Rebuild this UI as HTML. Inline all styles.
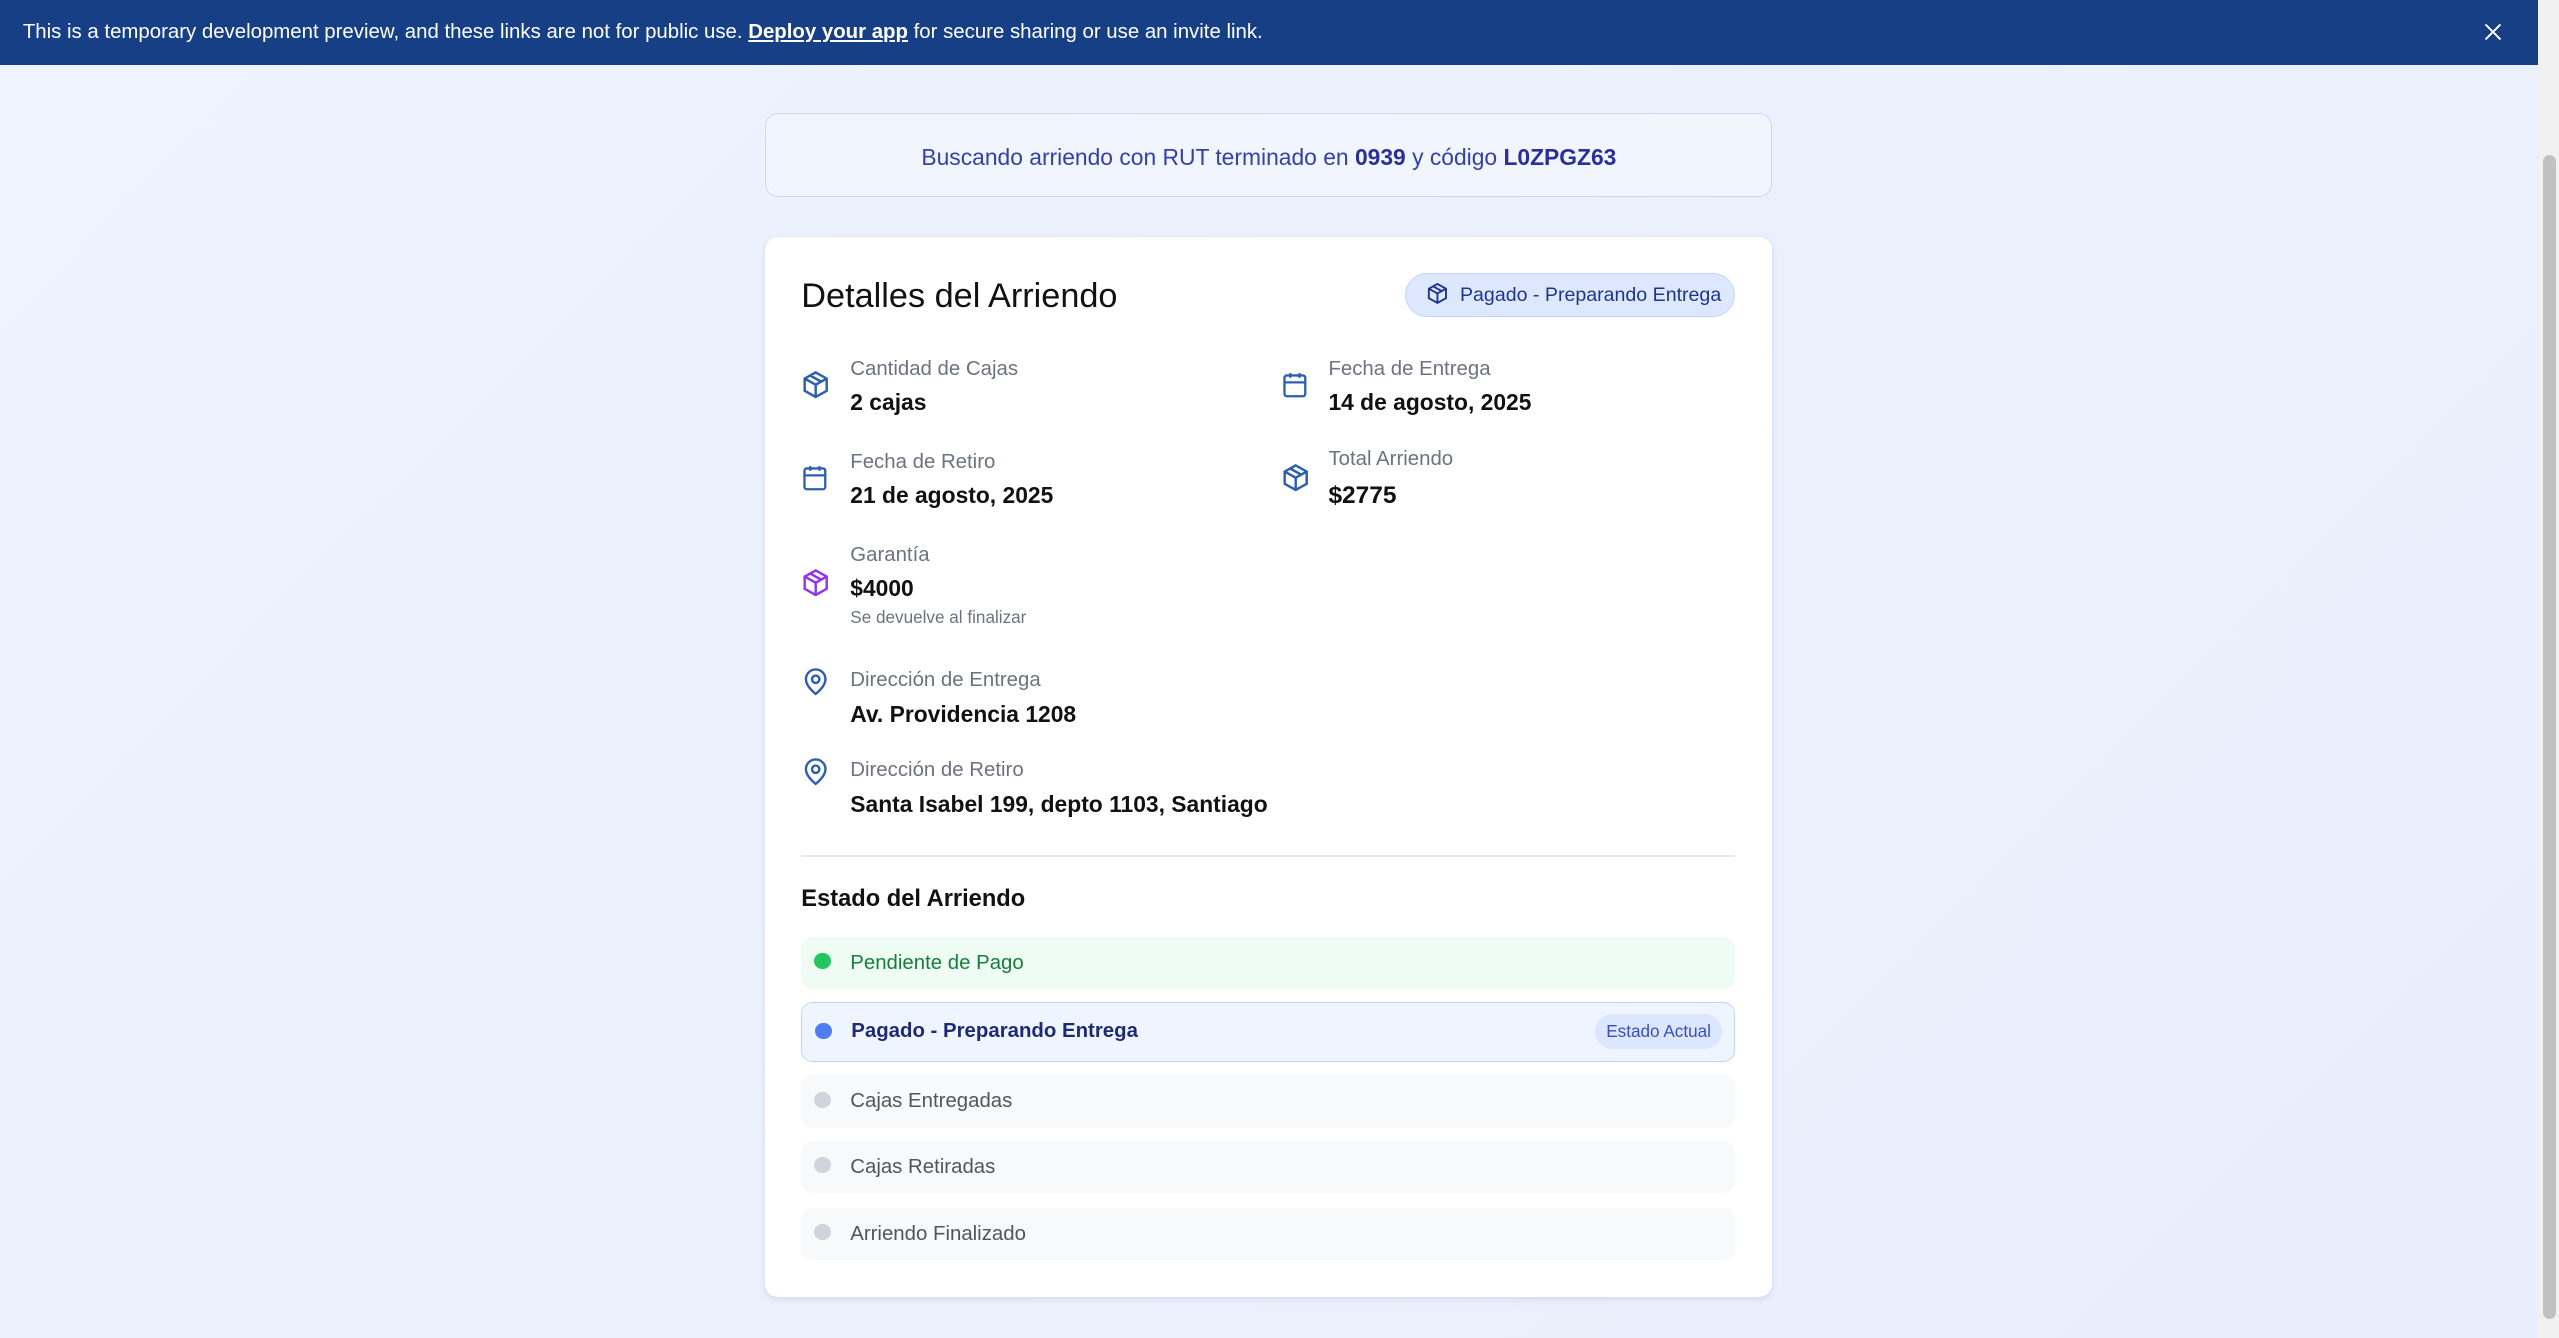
<!DOCTYPE html>
<html><head><meta charset="utf-8"><style>
html,body{margin:0;padding:0;width:2559px;height:1338px;overflow:hidden}
body{background:linear-gradient(135deg,#eef3fd,#e8eefc);font-family:"Liberation Sans",sans-serif}
#z{zoom:1.632;position:relative;width:1568px;height:820px}
.a{position:absolute}
.banner{left:0;top:0;width:1555px;height:40px;background:#173f86;color:#fff;font-size:12.5px;line-height:40px;padding-left:14px;box-sizing:border-box}
.banner u{font-weight:700}
.sb{left:1555px;top:0;width:13px;height:820px;background:#f1f1f1}
.thumb{left:1558px;top:95px;width:8px;height:713px;background:#c1c1c1;border-radius:4px}
.search{left:469px;top:69px;width:617px;height:52px;box-sizing:border-box;border:1px solid #cbd7f3;background:#f1f5fe;border-radius:8px;text-align:center;line-height:53px;font-size:14px;color:#3341a8}
.search b{color:#2a2f9a}
.card{left:469px;top:145px;width:617px;height:650px;background:#fff;border-radius:8px;box-shadow:0 1px 4px rgba(30,50,120,.12)}
.title{left:22px;top:23px;font-size:21px;color:#111;line-height:28px}
.badge{left:392px;top:22px;width:202px;height:27px;box-sizing:border-box;background:#dde8fe;border:1px solid #c2d4fb;border-radius:14px;font-size:12px;color:#1e3590;line-height:26px;padding-left:33px;white-space:nowrap}
.badge svg{position:absolute;left:12px;top:5px}
.lb{font-size:12.5px;color:#6b7280;line-height:16px}
.vl{font-size:14px;color:#111;font-weight:700;line-height:18px}
.sm{font-size:10.5px;color:#6b7280}
.hr{left:22px;top:379px;width:572px;height:1px;background:#e5e7eb}
.h2{left:22px;top:398px;font-size:14.5px;font-weight:700;color:#111}
.st{left:22px;width:572px;box-sizing:border-box;border-radius:7px;font-size:12.5px;padding-left:30px;white-space:nowrap}
.dot{position:absolute;left:8px;width:10px;height:10px;border-radius:50%}
</style></head><body><div id="z">
<div class="a banner">This is a temporary development preview, and these links are not for public use. <u>Deploy your app</u> for secure sharing or use an invite link.</div>
<svg class="a" style="left:1522px;top:14px" width="11" height="11" viewBox="0 0 12 12" stroke="#fff" stroke-width="1.3"><path d="M1 1l10 10M11 1L1 11"/></svg>
<div class="a sb"></div><div class="a thumb"></div>
<div class="a search">Buscando arriendo con RUT terminado en <b>0939</b> y código <b>L0ZPGZ63</b></div>
<div class="a card">
<div class="a title">Detalles del Arriendo</div>
<div class="a badge"><svg width="14" height="14" viewBox="0 0 24 24" fill="none" stroke="#1e3590" stroke-width="2"><path d="M12 2l9 5v10l-9 5-9-5V7z M3 7l9 5 9-5 M12 12v10 M7.5 4.5l9 5"/></svg>Pagado - Preparando Entrega</div>

<svg class="a" style="left:22px;top:82px" width="18" height="18" viewBox="0 0 24 24" fill="none" stroke="#2e5fae" stroke-width="2"><path d="M12 2l9 5v10l-9 5-9-5V7z M3 7l9 5 9-5 M12 12v10 M7.5 4.5l9 5"/></svg>
<div class="a" style="left:52px;top:73px"><div class="lb">Cantidad de Cajas</div><div class="vl" style="margin-top:4px">2 cajas</div></div>
<svg class="a" style="left:316px;top:82px" width="17" height="18" viewBox="0 0 24 24" fill="none" stroke="#2e5fae" stroke-width="2"><rect x="3" y="4" width="18" height="18" rx="2"/><path d="M16 2v4M8 2v4M3 10h18"/></svg>
<div class="a" style="left:345px;top:73px"><div class="lb">Fecha de Entrega</div><div class="vl" style="margin-top:4px">14 de agosto, 2025</div></div>

<svg class="a" style="left:22px;top:139px" width="17" height="18" viewBox="0 0 24 24" fill="none" stroke="#2e5fae" stroke-width="2"><rect x="3" y="4" width="18" height="18" rx="2"/><path d="M16 2v4M8 2v4M3 10h18"/></svg>
<div class="a" style="left:52px;top:130px"><div class="lb">Fecha de Retiro</div><div class="vl" style="margin-top:4px">21 de agosto, 2025</div></div>
<svg class="a" style="left:316px;top:139px" width="18" height="18" viewBox="0 0 24 24" fill="none" stroke="#2e5fae" stroke-width="2"><path d="M12 2l9 5v10l-9 5-9-5V7z M3 7l9 5 9-5 M12 12v10 M7.5 4.5l9 5"/></svg>
<div class="a" style="left:345px;top:128px"><div class="lb">Total Arriendo</div><div class="vl" style="margin-top:6px;font-size:15px">$2775</div></div>

<svg class="a" style="left:22px;top:203px" width="18" height="18" viewBox="0 0 24 24" fill="none" stroke="#9333ea" stroke-width="2"><path d="M12 2l9 5v10l-9 5-9-5V7z M3 7l9 5 9-5 M12 12v10 M7.5 4.5l9 5"/></svg>
<div class="a" style="left:52px;top:187px"><div class="lb">Garantía</div><div class="vl" style="margin-top:4px">$4000</div><div class="sm" style="margin-top:2px">Se devuelve al finalizar</div></div>

<svg class="a" style="left:22px;top:264px" width="18" height="18" viewBox="0 0 24 24" fill="none" stroke="#2e5fae" stroke-width="2"><path d="M20 10c0 6-8 12-8 12s-8-6-8-12a8 8 0 0 1 16 0z"/><circle cx="12" cy="10" r="3"/></svg>
<div class="a" style="left:52px;top:264px"><div class="lb">Dirección de Entrega</div><div class="vl" style="margin-top:4px">Av. Providencia 1208</div></div>
<svg class="a" style="left:22px;top:319px" width="18" height="18" viewBox="0 0 24 24" fill="none" stroke="#2e5fae" stroke-width="2"><path d="M20 10c0 6-8 12-8 12s-8-6-8-12a8 8 0 0 1 16 0z"/><circle cx="12" cy="10" r="3"/></svg>
<div class="a" style="left:52px;top:319px"><div class="lb">Dirección de Retiro</div><div class="vl" style="margin-top:4px">Santa Isabel 199, depto 1103, Santiago</div></div>

<div class="a hr"></div>
<div class="a h2">Estado del Arriendo</div>
<div class="a st" style="top:429px;height:32px;line-height:32px;background:#effcf3;color:#15803d"><span class="dot" style="top:10px;background:#22c55e"></span>Pendiente de Pago</div>
<div class="a st" style="top:469px;height:37px;line-height:35px;background:#eff5ff;border:1px solid #bfd5fb;color:#1e2a78;font-weight:700"><span class="dot" style="top:12px;background:#4f7cf0"></span>Pagado - Preparando Entrega<span style="position:absolute;right:7px;top:7px;height:21px;line-height:21px;padding:0 7px;background:#dce7fe;border-radius:11px;font-size:10.5px;color:#3b4cc0;font-weight:400">Estado Actual</span></div>
<div class="a st" style="top:514px;height:32px;line-height:32px;background:#f8f9fb;color:#555"><span class="dot" style="top:10px;background:#d1d5db"></span>Cajas Entregadas</div>
<div class="a st" style="top:554px;height:32px;line-height:32px;background:#f8f9fb;color:#555"><span class="dot" style="top:10px;background:#d1d5db"></span>Cajas Retiradas</div>
<div class="a st" style="top:595px;height:32px;line-height:32px;background:#f8f9fb;color:#555"><span class="dot" style="top:10px;background:#d1d5db"></span>Arriendo Finalizado</div>
</div>
</div></body></html>
